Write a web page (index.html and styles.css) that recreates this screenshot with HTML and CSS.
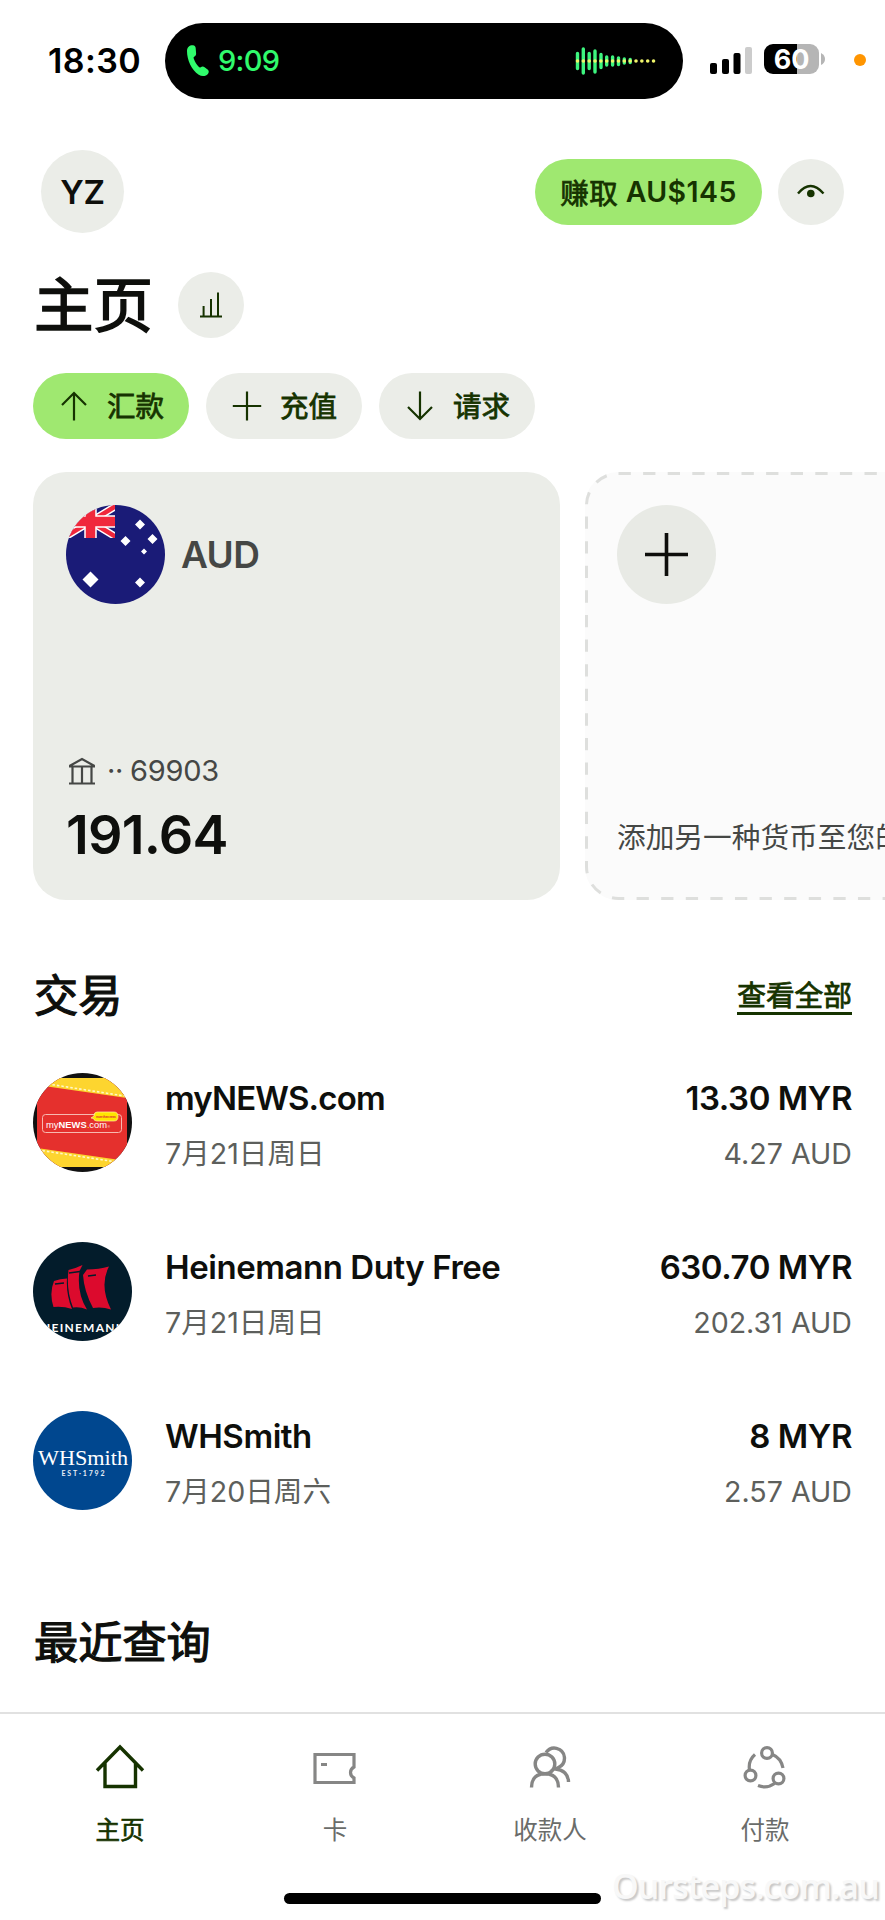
FILE: index.html
```html
<!DOCTYPE html>
<html lang="zh-CN">
<head>
<meta charset="utf-8">
<meta name="viewport" content="width=device-width">
<title>主页</title>
<link rel="stylesheet" href="styles.css">
</head>
<body>
<div class="screen">
  <div class="status">
    <span class="clock">18:30</span>
    <div class="island">
      <svg class="phone" width="23" height="32" viewBox="0 0 23 32"><path fill="#30fb6c" d="M1 6C1 2 4 0 7 .3c1.700.2 2.600 1.200 2.700 3l.4 5c.1 1.800-.6 2.600-2 3.500-.7.5-.6 1.200-.2 2.200 1.200 3 2.600 5.500 4.800 7.800.7.7 1.300.9 2 .4 1.300-.9 2.600-1 3.900 0l3 2.400c1.300 1 1.500 2.400.6 3.800-2 3-6 3.600-9.500 1.400C5.500 25 1 15 1 6z"/></svg>
      <span class="call">9:09</span>
      <svg class="wave" width="81" height="30" viewBox="0 0 81 30">
        <g stroke="#3df57f" stroke-width="3.400" stroke-linecap="round">
          <path d="M2.500 7.500v15M8.300 3v24M14.200 7.500v15M20 5v21M26 8.500v13M31.700 11v8M37.600 11v8M43.500 12v6.500M49.300 13v4M55.200 13.500v3"/>
        </g>
        <path stroke="#f0f56a" stroke-width="3.600" stroke-linecap="round" stroke-dasharray="0 5.850" d="M2.500 15H80"/>
      </svg>
    </div>
    <svg class="signal" width="43" height="28" viewBox="0 0 43 28"><rect y="16" width="7" height="11" rx="2"/><rect x="12" y="12" width="7" height="15" rx="2"/><rect x="23.500" y="6" width="7" height="21" rx="2"/><rect x="35" width="7" height="27" rx="2" fill="#ccc"/></svg>
    <div class="battery"><span>60</span></div>
    <svg class="nub" width="4" height="12" viewBox="0 0 4 12"><path fill="#b5b5b5" d="M0 0q4 2 4 6t-4 6z"/></svg>
    <i class="mic"></i>
  </div>

  <header class="top">
    <div class="initials">YZ</div>
    <div class="earn"><span class="semi">赚取</span>&nbsp;AU$145</div>
    <div class="round"><svg width="30" height="16" viewBox="0 0 30 16"><path d="M2 9.500Q14.500-5.500 27.500 9.500" fill="none" stroke="#163300" stroke-width="2.400"/><circle cx="14.800" cy="9.500" r="3.800" fill="#163300"/></svg></div>
  </header>

  <div class="heading">
    <h1>主页</h1>
    <div class="round"><svg width="22" height="26" viewBox="0 0 22 26" stroke="#163300" stroke-width="2" fill="none"><path d="M0 24.500h22M3.600 24V14M11 24V7M18 24V.5"/></svg></div>
  </div>

  <div class="actions">
    <div class="pill primary"><svg width="30" height="30" viewBox="0 0 30 30"><path d="M15 29.500V2M3 14 15 2l12 12"/></svg><span class="semi">汇款</span></div>
    <div class="pill"><svg width="30" height="30" viewBox="0 0 30 30"><path d="M15 .5v29M.8 15h28.400"/></svg><span class="semi">充值</span></div>
    <div class="pill"><svg width="30" height="30" viewBox="0 0 30 30"><path d="M15 .5V28M3 16l12 12 12-12"/></svg><span class="semi">请求</span></div>
  </div>

  <div class="cards">
    <section class="card">
      <div class="currency">
        <svg width="99" height="99" viewBox="0 0 99 99">
          <defs><clipPath id="disc"><circle cx="49.500" cy="49.500" r="49.500"/></clipPath><clipPath id="canton"><path d="M0 0h49v33H0z"/></clipPath></defs>
          <g clip-path="url(#disc)">
            <path fill="#1a1b77" d="M0 0h99v99H0z"/>
            <g clip-path="url(#canton)">
              <path d="M-6-2 55 35M55-2-6 35" stroke="#fff" stroke-width="7.500"/>
              <path d="M-6-2 55 35M55-2-6 35" stroke="#f0283c" stroke-width="4.600"/>
              <path d="M24.500 0v33M0 16.500h49" stroke="#fff" stroke-width="12.500"/>
              <path d="M24.500 0v33M0 16.500h49" stroke="#f0283c" stroke-width="9.500"/>
            </g>
            <path fill="#fff" d="m24.500 66.500 8 8-8 8-8-8zM74 14.500l5 5-5 5-5-5zM59.500 31l5 5-5 5-5-5zM86.500 29l5 5-5 5-5-5zM78 43.500l3 3-3 3-3-3zM74 72.500l5 5-5 5-5-5z"/>
          </g>
        </svg>
        <span>AUD</span>
      </div>
      <div class="account"><svg width="28" height="28" viewBox="0 0 28 28" fill="none" stroke="#454745" stroke-width="2.200"><path d="M1 26.500h26M1 9.500h26M1.500 9 14 2l12.500 7M4.500 10v16M14 10v16M23.500 10v16"/></svg><span class="dots">··</span><span>69903</span></div>
      <div class="balance">191.64</div>
    </section>
    <section class="card add">
      <svg class="dash" width="528" height="428"><rect x="1.500" y="1.500" width="525" height="425" rx="32"/></svg>
      <div class="plus"><svg width="43" height="43" viewBox="0 0 43 43"><path d="M21.500 0v43M0 21.500h43" stroke="#0e0f0c" stroke-width="3.600"/></svg></div>
      <p>添加另一种货币至您的</p>
    </section>
  </div>

  <div class="section-head"><h2>交易</h2><a class="semi">查看全部</a></div>

  <ul class="list">
    <li>
      <svg width="99" height="99" viewBox="0 0 99 99">
        <g clip-path="url(#disc)">
          <path fill="#111" d="M0 0h99v99H0z"/><path fill="#e5302d" d="M4 5h90v89H4z"/>
          <path fill="#fdd52f" d="M4 5h90v20L4 12zM4 75l90 13v6H4z"/>
          <path d="M15 11l80 12.500M5 77l85 13" stroke="#fff7c8" stroke-width="1.600" stroke-dasharray="2.500 2"/>
          <rect x="9.500" y="41.500" width="79" height="18" rx="3" fill="none" stroke="#f7b9b0" stroke-width="1"/>
          <path fill="#ffe600" stroke="#fff0a0" stroke-width=".7" d="M64 39h17q4 0 4 4.500t-4 4.500H64q-3 0-3.500-2.500L58 45l3-2q0-4 3-4z"/>
          <text x="63" y="45" class="tag-line" textLength="20">more than news</text>
          <text x="13" y="54.500" class="my" textLength="64" lengthAdjust="spacingAndGlyphs"><tspan>my</tspan><tspan class="b">NEWS</tspan><tspan class="y">.</tspan><tspan>com</tspan><tspan class="r"> ®</tspan></text>
        </g>
      </svg>
      <div class="info"><b class="tight">myNEWS.com</b><small>7月21日周日</small></div>
      <div class="sum"><b>13.30 MYR</b><small>4.27 AUD</small></div>
    </li>
    <li>
      <svg width="99" height="99" viewBox="0 0 99 99">
        <g clip-path="url(#disc)">
          <path fill="#031c2b" d="M0 0h99v99H0z"/>
          <path fill="#dc0a2d" d="M21 39q6-2.500 13-2.500-1 16 5 30.500-9-3-18.500-2Q16 51 21 39zM35.500 28q8-2 14-5l-3 6q-3 22 7.500 38.500-7-3-14-2Q33 48 35.500 28zM54 27.500q12 0 22-3-10 19 2 43-9-3-18-1.500-9-17-10-33z"/>
          <path stroke="#031c2b" stroke-width="1.500" fill="none" d="M36 31l11-1.500M55 34l8-1M22 42l9-1"/>
          <text x="8" y="90" class="heine" textLength="84">HEINEMANN</text>
        </g>
      </svg>
      <div class="info"><b>Heinemann Duty Free</b><small>7月21日周日</small></div>
      <div class="sum"><b>630.70 MYR</b><small>202.31 AUD</small></div>
    </li>
    <li>
      <svg width="99" height="99" viewBox="0 0 99 99">
        <circle cx="49.500" cy="49.500" r="49.500" fill="#00478f"/>
        <text x="5" y="54" class="whs" textLength="90" lengthAdjust="spacingAndGlyphs">WHSmith</text>
        <text x="28.500" y="65" class="est" textLength="43">EST·1792</text>
      </svg>
      <div class="info"><b>WHSmith</b><small>7月20日周六</small></div>
      <div class="sum"><b>8 MYR</b><small>2.57 AUD</small></div>
    </li>
  </ul>

  <h2 class="recent">最近查询</h2>

  <nav class="tabs">
    <div class="tab on"><svg width="50" height="46" viewBox="0 0 50 46" fill="none" stroke="#163300" stroke-width="3.400"><path d="M2 26.500 25 3l23 23.500M10 19v23.500h30.500V19"/></svg><span class="semi">主页</span></div>
    <div class="tab"><svg width="50" height="46" viewBox="0 0 50 46" fill="none" stroke="#868685" stroke-width="3.200"><path d="M5 10.500h39v12.500q-3.500 2-3.500 5.500t3.500 5.500v4.500H5zM11 20.500h6"/></svg>卡</div>
    <div class="tab"><svg width="50" height="46" viewBox="0 0 50 46" fill="none" stroke="#868685" stroke-width="3.400"><circle cx="20" cy="20" r="9.800"/><path d="M6.500 43.500C6.500 34 12 29.800 20 29.800S33.500 34 33.500 43.500M21 8.500C24 4.500 28 3.500 31.500 4.300c10 2.500 10.500 15 2 19.200L30.500 25c8 1 13 5.500 13 13"/></svg>收款人</div>
    <div class="tab"><svg width="50" height="46" viewBox="0 0 50 46" fill="none" stroke="#868685" stroke-width="3.200"><circle cx="27" cy="9" r="5.400"/><circle cx="10.500" cy="31.500" r="5.400"/><circle cx="38.500" cy="34.500" r="5.400"/><path d="M9.500 26Q8 16.500 15 10.500M32.500 10.500Q41 14 43 24M34.500 39.500Q27 45 18 41.500"/></svg>付款</div>
  </nav>
  <div class="indicator"></div>
  <div class="watermark">Oursteps.com.au</div>
</div>
</body>
</html>
```
FILE: styles.css
```css
* { box-sizing: border-box; margin: 0; padding: 0; }
body { background: #fff; color: #0e0f0c; font-family: Inter, "Noto Sans CJK SC", sans-serif; }
svg { display: block; flex: none; }
.screen { position: relative; width: 885px; height: 1920px; overflow: hidden; display: flex; flex-direction: column; background: #fff; }

/* CJK semibold: regular outlines thickened slightly */
.semi, h1, h2 { font-weight: 400; -webkit-text-stroke: .027em currentColor; }

.status { display: flex; align-items: center; height: 76px; margin-top: 23px; padding-left: 48px; flex: none; }
.clock { width: 117px; font-size: 34px; font-weight: 600; color: #000; letter-spacing: .4px; margin-top: -2px; white-space: nowrap; }
.island { width: 518px; height: 76px; border-radius: 38px; background: #000; display: flex; align-items: center; padding: 0 27px 0 21px; }
.call { margin: -1px 0 0 9px; font-size: 29px; font-weight: 500; letter-spacing: -.7px; color: #30fb6c; }
.wave { margin-left: auto; }
.signal { margin-left: 27px; }
.battery { width: 55px; height: 30px; margin: -4px 2px 0 11px; border-radius: 9px; background: linear-gradient(90deg, #000 60%, #b5b5b5 60%); color: #fff; font-size: 27px; font-weight: 700; line-height: 31px; text-align: center; }
.nub { margin-top: -4px; }
.mic { width: 12px; height: 12px; border-radius: 50%; background: #ff9500; margin-left: 29px; margin-top: -2px; }

.top { display: flex; align-items: center; margin: 51px 41px 0; height: 83px; flex: none; }
.initials { width: 83px; height: 83px; border-radius: 50%; background: #ebede8; display: flex; align-items: center; justify-content: center; font-size: 33px; font-weight: 600; letter-spacing: -.4px; }
.earn { margin-left: auto; width: 227px; height: 66px; border-radius: 33px; background: #9fe870; color: #163300; display: flex; align-items: center; justify-content: center; padding-bottom: 1px; font-size: 28.500px; font-weight: 600; letter-spacing: .4px; white-space: nowrap; }
.round { width: 66px; height: 66px; border-radius: 50%; background: #ebede8; display: flex; align-items: center; justify-content: center; }
.top .round { margin-left: 16px; }

.heading { display: flex; align-items: center; height: 66px; margin: 39px 0 0 34px; gap: 26px; flex: none; }
h1 { width: 118px; font-size: 59.500px; line-height: 66px; white-space: nowrap; }

.actions { display: flex; gap: 17px; margin: 35px 0 0 33px; flex: none; }
.pill { width: 156px; height: 66px; border-radius: 33px; background: #ebede8; color: #163300; display: flex; align-items: center; gap: 18px; padding-left: 26px; font-size: 28.500px; white-space: nowrap; }
.pill svg { fill: none; stroke: #163300; stroke-width: 2.200; }
.pill .semi { padding-bottom: 3px; }
.primary { background: #9fe870; }

.cards { display: flex; gap: 25px; margin: 33px 0 0 33px; flex: none; }
.card { width: 527px; height: 428px; flex: none; border-radius: 33px; background: #ebede8; padding: 33px; display: flex; flex-direction: column; }
.currency { display: flex; align-items: center; gap: 16px; font-size: 37px; font-weight: 600; letter-spacing: -.6px; color: #454745; }
.account { display: flex; align-items: center; margin: auto 0 0 2px; font-size: 29px; line-height: 36px; letter-spacing: -.3px; color: #454745; }
.dots { margin: 0 7px 0 11px; }
.balance { font-size: 54px; line-height: 64px; font-weight: 600; letter-spacing: -.8px; margin-top: 14px; }
.add { position: relative; background: #fbfbfb; justify-content: space-between; padding-left: 32px; }
.dash { position: absolute; left: 0; top: 0; fill: none; stroke: #dedfdd; stroke-width: 3px; stroke-dasharray: 12.300 12.300; }
.plus { width: 99px; height: 99px; border-radius: 50%; background: #e8eae5; display: flex; align-items: center; justify-content: center; }
.add p { font-size: 28.700px; line-height: 36px; color: #454745; white-space: nowrap; margin-bottom: 11px; }

h2 { font-size: 44.200px; line-height: 60px; padding: 1px 0 0 1px; }
.section-head { display: flex; justify-content: space-between; align-items: center; height: 60px; margin: 65px 33px 0; flex: none; }
.section-head a { font-size: 28.700px; line-height: 32px; padding-top: 4px; color: #163300; border-bottom: 3px solid #163300; }

.list { list-style: none; display: flex; flex-direction: column; gap: 70px; margin: 48px 33px 0; flex: none; }
.list li { display: flex; height: 99px; }
.info, .sum { display: flex; flex-direction: column; gap: 14px; padding-top: 4px; white-space: nowrap; }
.info { margin-left: 33px; }
.sum { margin-left: auto; text-align: right; }
.list b { font-size: 33px; line-height: 42px; font-weight: 600; letter-spacing: -.45px; }
.list b.tight { letter-spacing: -.85px; }
.list small { font-size: 28.600px; line-height: 42px; color: #5d5f5c; }
.my { font: 9.500px "Liberation Sans", sans-serif; fill: #fff; }
.my .b { font-weight: 700; }
.my .y { fill: #ffe600; }
.my .r { font-size: 3px; }
.tag-line { font: bold 3px "Liberation Sans", sans-serif; fill: #d33; }
.heine { font: 700 12px Lato, sans-serif; fill: #fff; }
.whs { font: 22px "Liberation Serif", serif; fill: #fff; }
.est { font: bold 7px Lato, sans-serif; fill: #e8eef6; }

.recent { margin: 102px 0 0 33px; flex: none; }
.tabs { position: absolute; left: 0; top: 1712px; width: 885px; height: 208px; border-top: 2px solid #e1e1e1; background: #fff; padding: 30px 12.500px 0; display: flex; }
.tab { width: 215px; display: flex; flex-direction: column; align-items: center; gap: 22px; font-size: 24.500px; line-height: 36px; color: #6a6c6a; }
.on { color: #163300; }
.indicator { position: absolute; left: 284px; top: 1893px; width: 317px; height: 11px; border-radius: 6px; background: #000; }
.watermark { position: absolute; left: 612px; top: 1862px; font: 600 34px/48px "Open Sans", sans-serif; letter-spacing: -.9px; color: #f8f8f8; text-shadow: 2px 2px 2px #c8c8c8; white-space: nowrap; }
```
